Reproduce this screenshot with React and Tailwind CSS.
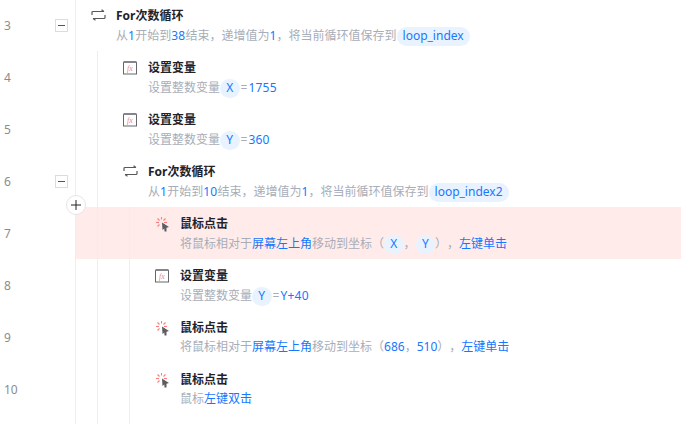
const Chip = ({ children }) => (
  <span className="inline-flex h-[19px] min-w-[19.5px] items-center justify-center rounded-full bg-[#e8f3ff] px-[6px] text-[#1677ff]">{children}</span>
);
const B = ({ children }) => <span className="text-[#1677ff]">{children}</span>;
const N = ({ children }) => <span className="text-[#1677ff] tracking-[0.25px]">{children}</span>;
const Eq = () => <span className="mx-px">=</span>;

const LoopIcon = () => (
  <svg width="15" height="12" viewBox="0 0 15 12" fill="none" stroke="#595959" strokeWidth="1.2">
    <path d="M1 6V3.5Q1 2.5 2 2.5H13" />
    <path d="M14 6V8.5Q14 9.5 13 9.5H2" />
    <path d="M10.5 0.8L13 2.5" />
    <path d="M4.5 11.2L2 9.5" />
  </svg>
);
const VarIcon = () => (
  <svg width="15" height="14" viewBox="0 0 15 14" fill="none">
    <rect x="0.5" y="1.5" width="13" height="11.5" fill="#fff" stroke="#66666c" />
    <rect x="0.5" y="0" width="13" height="2" fill="#85858b" />
    <text x="7" y="10" fontSize="8" fontStyle="italic" textAnchor="middle" fill="#f47f7f" fontFamily="Liberation Serif, serif">fx</text>
  </svg>
);
const ClickIcon = () => (
  <svg width="15" height="15" viewBox="0 0 15 15" fill="none">
    <g stroke="#ff7b7b" strokeWidth="1.1">
      <path d="M6.5 0V2.5" />
      <path d="M2.5 1.5L4.5 3.5" />
      <path d="M10.5 1.5L8.5 3.5" />
      <path d="M1 5.5H4" />
      <path d="M2.5 9.5L4.5 7.5" />
      <path d="M9 5.5H12" />
    </g>
    <path d="M7 5.5L14 10L11.5 10.8L11.5 14.5L9.5 14.5L9.3 11.5L7.5 13Z" fill="#5c5c62" />
  </svg>
);

const Toggle = () => (
  <span className="flex h-[13px] w-[13px] items-center justify-center border border-[#dcdcdc] bg-white">
    <span className="h-px w-[7px] bg-[#555]" />
  </span>
);

const rows = [
  { n: 3, depth: 0, toggle: true, icon: <LoopIcon />, title: "For次数循环",
    sub: <>从<N>1</N>开始到<N>38</N>结束，递增值为<N>1</N>，将当前循环值保存到<Chip>loop_index</Chip></> },
  { n: 4, depth: 1, icon: <VarIcon />, title: "设置变量", sub: <>设置整数变量<Chip>X</Chip><Eq /><N>1755</N></> },
  { n: 5, depth: 1, icon: <VarIcon />, title: "设置变量", sub: <>设置整数变量<Chip>Y</Chip><Eq /><N>360</N></> },
  { n: 6, depth: 1, toggle: true, icon: <LoopIcon />, title: "For次数循环",
    sub: <>从<N>1</N>开始到<N>10</N>结束，递增值为<N>1</N>，将当前循环值保存到<Chip>loop_index2</Chip></> },
  { n: 7, depth: 2, active: true, icon: <ClickIcon />, title: "鼠标点击",
    sub: <>将鼠标相对于<B>屏幕左上角</B>移动到坐标（<Chip>X</Chip>，<Chip>Y</Chip>），<B>左键单击</B></> },
  { n: 8, depth: 2, icon: <VarIcon />, title: "设置变量", sub: <>设置整数变量<Chip>Y</Chip><Eq /><N>Y+40</N></> },
  { n: 9, depth: 2, tight: true, icon: <ClickIcon />, title: "鼠标点击",
    sub: <>将鼠标相对于<B>屏幕左上角</B>移动到坐标（<B>686</B>，<B>510</B>），<B>左键单击</B></> },
  { n: 10, depth: 2, tight: true, icon: <ClickIcon />, title: "鼠标点击", sub: <>鼠标<B>左键双击</B></> },
];

const Row = ({ r }) => (
  <div className="flex h-[52px] shrink-0">
    <div className="flex w-[75px] shrink-0 items-center justify-between pl-1 pr-[7px] text-xs text-[#8c8c8c]">
      <span className="mt-[2px]">{r.n}</span>
      {r.toggle && <Toggle />}
    </div>
    <div className={`flex min-w-0 flex-1 border-l border-[#eeeeee] ${r.active ? "bg-[#ffecea]" : "bg-white"}`}>
      {r.depth >= 1 && <div className="w-[21px] shrink-0" />}
      {r.depth === 1 && <div className="w-[26px] shrink-0 border-l border-[#eeeeee]" />}
      {r.depth === 2 && <div className="w-8 shrink-0 border-l border-[#eeeeee]" />}
      <div className={`flex min-w-0 flex-1 ${r.depth === 2 ? "border-l border-[#eeeeee] pl-[25px]" : r.depth === 0 ? "pl-[15px]" : ""}`}>
        <div className="flex w-[25px] shrink-0 pt-[10px]">{r.icon}</div>
        <div className="flex flex-col justify-center pt-[2px]">
          <div className="flex h-5 items-center font-bold leading-5 text-[#1f2329]">{r.title}</div>
          <div className={`flex h-5 items-center whitespace-nowrap text-[#a8adb8] [text-spacing-trim:space-all] ${r.tight ? "pb-[2px]" : ""}`}>{r.sub}</div>
        </div>
      </div>
    </div>
  </div>
);

export default function App() {
  return (
    <div className="relative flex h-[424px] w-[681px] flex-col overflow-hidden bg-white text-xs" style={{ fontFamily: '"Noto Sans", "Noto Sans CJK SC", sans-serif' }}>
      <div className="-mt-px flex flex-col">
        {rows.map((r) => <Row key={r.n} r={r} />)}
      </div>
      <div className="ml-[75px] flex flex-1 border-l border-[#eeeeee]">
        <div className="ml-[21px] w-8 border-l border-[#eeeeee]" />
        <div className="border-l border-[#eeeeee]" />
      </div>
      <div className="absolute left-[66px] top-[195px] flex h-5 w-5 items-center justify-center rounded-full border border-[#e5e5e5] bg-white">
        <svg width="10" height="10" viewBox="0 0 10 10" stroke="#222" strokeWidth="1"><path d="M5 0V10M0 5H10" /></svg>
      </div>
    </div>
  );
}
